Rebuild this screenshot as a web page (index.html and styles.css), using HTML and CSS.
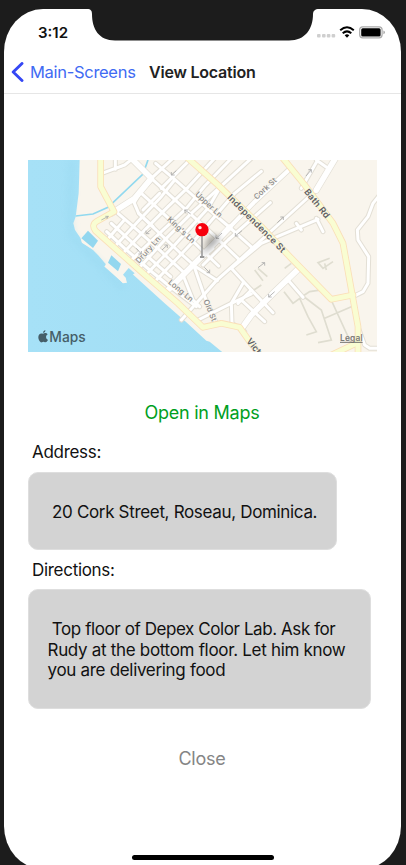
FILE: index.html
```
<!DOCTYPE html>
<html lang="en">
<head>
<meta charset="utf-8">
<title>View Location</title>
<link rel="stylesheet" href="styles.css">
</head>
<body>
<div class="device">
<div class="screen">
  <svg class="notch" width="232" height="32" viewBox="0 0 232 32"><path d="M0 0C4 0 5 2 5 5C5 20 12 31.500 28 31.500H202C218 31.500 226 20 226 5C226 2 228 0 232 0Z"/></svg>
  <header class="status">
    <span class="time">3:12</span>
    <svg class="indicators" width="70" height="16" viewBox="0 0 70 16">
      <g fill="#cfcfcf"><rect x="1" y="9" width="3.600" height="3.600" rx="1"/><rect x="6" y="9" width="3.600" height="3.600" rx="1"/><rect x="10.800" y="9" width="3.600" height="3.600" rx="1"/><rect x="15.600" y="9" width="3.600" height="3.600" rx="1"/></g>
      <g fill="none" stroke="#000" stroke-width="2"><path d="M24.200 5.200Q31 -0.600 37.800 5.200"/><path d="M26.700 8.200Q31 4.500 35.300 8.200"/></g>
      <path d="M28.700 10.300Q31 8.400 33.300 10.300L31 12.700Z"/>
      <rect x="43.700" y="1.800" width="22.400" height="11" rx="3" fill="#fff" stroke="#aaa" stroke-width="1.200"/>
      <rect x="45.200" y="3.200" width="19.400" height="8.200" rx="1.500"/>
      <path d="M67.400 5.500Q69 6 69 7.300T67.400 9.200Z" fill="#aaa"/>
    </svg>
  </header>
  <nav class="nav">
    <svg class="chevron" width="13" height="20" viewBox="0 0 13 20"><path d="M11 1.500L2.200 10L11 18.500"/></svg>
    <span class="back">Main-Screens</span>
    <h1 class="title">View Location</h1>
  </nav>
  <main class="content">
    <svg class="map" width="349" height="192" viewBox="0 0 1047 576">
      <defs>
        <filter id="soft" x="-20%" y="-20%" width="140%" height="140%"><feGaussianBlur stdDeviation="9"/></filter>
        <linearGradient id="sea" x1="0" x2="1" y1="0" y2="0"><stop offset="0" stop-color="#a6e1f7"/><stop offset="1" stop-color="#a2def4"/></linearGradient>
        <g id="lanes">
          <path d="M383 10L440 58L530 138L600 198L672 262"/>
          <path d="M305 -6L370 55L480 155L560 228L637 302"/>
          <path d="M337 97L400 155L470 220L522 270L572 318"/>
          <path d="M317 125L332 160L400 225L460 282L500 318L568 362"/>
          <path d="M270 160L330 212L400 275L465 335"/>
          <path d="M250 190L310 245L380 308L428 350"/>
          <path d="M236 215L290 265L365 330L420 375L505 440"/>
          <path d="M242 234L287 182"/>
          <path d="M262 258L332 182L400 110L440 60"/>
          <path d="M288 277L355 205L420 140L480 82L560 -5"/>
          <path d="M312 298L400 215L475 145L530 78L610 -5"/>
          <path d="M335 322L415 235L490 160L545 110L670 -5"/>
          <path d="M358 340L440 255L540 145L575 85"/>
          <path d="M380 365L460 282L500 240L620 100L700 34"/>
          <path d="M370 55L435 -5M400 85L490 -5"/>
          <path d="M228 38L290 15L315 -5M262 28V-5"/>
          <path d="M320 125L337 97L370 60"/>
          <path d="M375 200L332 160M345 150L395 100"/>
          <path d="M525 315L600 240L727 128"/>
          <path d="M480 330L555 265"/>
          <path d="M460 480L565 362L640 295L700 240L865 90"/>
          <path d="M610 325L700 250L870 178M865 175L885 215M805 190L820 210"/>
          <path d="M610 325L670 390L735 458M645 370L610 430L612 490L650 515"/>
          <path d="M465 345L495 420L515 440M498 318L530 410L565 490"/>
          <path d="M510 480L610 430L670 402"/>
          <path d="M640 420L710 485M670 390L630 430M780 360L825 412"/>
          <path d="M820 85L872 -5M865 0L900 25"/>
          <path d="M1055 105L1035 130L1020 170L988 210L990 240L1022 290L1020 370L1005 395L975 410"/>
          <path d="M990 500L1010 555L1025 565H1055"/>
        </g>
        <g id="streets">
          <path d="M250 160L320 115L370 55L310 -5"/>
          <path d="M415 395L520 290L605 202"/>
          <path d="M645 500L670 465L740 395L810 328"/>
          <path d="M865 90L925 -10"/>
        </g>
        <path id="cork" d="M605 202L680 125L780 32"/>
        <g id="avenues">
          <path d="M218 -5V80L258 155L205 185Q190 195 202 212L340 335L450 430L525 502L580 490L635 502L665 545L700 590"/>
          <path d="M480 -5L570 75L700 200L790 295L910 418L975 405"/>
          <path d="M765 -5L830 75L915 190L945 250L972 400L990 500V590"/>
          <path d="M900 590L985 550"/>
        </g>
      </defs>
      <rect width="1047" height="576" fill="#f9f5ed"/>
      <path d="M0 0H155L152 100L143 170L136 190L141 210L158 235L162 248L195 270L210 285L240 320L290 365L300 330L410 430L475 487L535 542L545 545L585 578H0Z" fill="url(#sea)"/>
      <path d="M130 0L126 170L130 225L285 385" fill="none" stroke="#91d3ec" stroke-width="20" opacity=".25" filter="url(#soft)"/>
      <path d="M158 235L162 248L195 268L205 265L185 245L165 228Z" fill="#f9f5ed"/>
      <path d="M160 235L180 212L210 242L195 264Z" fill="#93d7ef"/>
      <path d="M232 316L245 288L302 328L292 350L297 368L285 370Z" fill="#f9f5ed"/>
      <path d="M240 308L250 286L279 312L270 334Z" fill="#93d7ef"/>
      <path d="M285 344L302 324L320 340L296 356Z" fill="#a2def4"/>
      <path d="M232 316L288 366" stroke="#f9f5ed" stroke-width="9"/>
      <path d="M143 168L195 162L240 142L345 42L360 0" fill="none" stroke="#91d9ef" stroke-width="5"/>
      <g fill="none" stroke="#dfddd0" stroke-width="5"><path d="M768 395L795 430L825 408L845 395L880 390L905 410L975 562M815 415L840 470L865 515L835 525M825 408L880 450L910 540L870 548M890 475L970 440M905 295L870 308L885 325L915 305M890 310L895 330M680 330L705 362M690 325L718 350M670 395L700 375M770 325L790 310"/></g>
      <g fill="none" stroke-linejoin="round" stroke-linecap="round">
        <use href="#lanes" stroke="#e3dfd5" stroke-width="15"/>
        <use href="#cork" stroke="#e3dfd5" stroke-width="17"/>
        <use href="#streets" stroke="#e3dfd5" stroke-width="21"/>
        <use href="#lanes" stroke="#fff" stroke-width="9"/>
        <use href="#cork" stroke="#fff" stroke-width="12"/>
        <use href="#streets" stroke="#fff" stroke-width="17"/>
        <use href="#avenues" stroke="#fbdfb8" stroke-width="20"/>
        <use href="#avenues" stroke="#f9fdd2" stroke-width="15"/>
      </g>
      <g fill="none" stroke="#aaa" stroke-width="2.500">
        <path d="M220 180L241 169M232 169L241 169L236 177"/>
        <path d="M430 45L445 32M430 36V45H440M488 162L470 150M472 160L470 150H480M370 208L354 221M354 212V221H364M402 270L418 255M409 255H418V264M545 338L529 322M545 329V338H536M564 235L582 219M564 226V235H573M622 228L642 212M622 219V228H631M690 323L710 308M701 308H710V317M748 188L766 171M757 171H766V180M722 411L740 395M722 402V411H731M834 48L850 29M841 29H850V38M325 265L340 282M331 282H340V273"/>
      </g>
      <g class="label">
        <text transform="translate(500 105) rotate(43)" textLength="101">Upper Ln</text>
        <text transform="translate(416 180) rotate(43)" textLength="104">King's Ln</text>
        <text transform="translate(333 311) rotate(-48)" textLength="98">Drury Ln</text>
        <text transform="translate(419 369) rotate(40)" textLength="90">Long Ln</text>
        <text transform="translate(526 422) rotate(68)" textLength="69">Old St</text>
        <text transform="translate(686 120) rotate(-43)" textLength="84">Cork St</text>
      </g>
      <g class="label major">
        <text transform="translate(596 114) rotate(45)" textLength="234">Independence St</text>
        <text transform="translate(827 96) rotate(51)" textLength="104">Bath Rd</text>
        <text transform="translate(654 544) rotate(51)">Vict</text>
      </g>
      <path d="M524 286L540 232L568 225L575 240Z" opacity=".35" filter="url(#soft)"/>
      <path d="M522 220V288" stroke="#888" stroke-width="4"/><path d="M516 291H529" stroke="#666" stroke-width="4"/>
      <circle cx="522" cy="209" r="20" fill="#f7000c"/><circle cx="516" cy="203" r="5" fill="#fff" opacity=".9"/>
      <g transform="translate(30 512)" fill="#455e68"><path d="M15 9C18 9 20 6 24 7Q27 8 29 11Q24 14 24 19Q24 25 30 28Q26 36 21 35Q16 32 12 35C6 37 1 27 1 20C1 11 7 6 15 9Z"/><path d="M15 7Q14 1 22 -2Q23 5 15 7Z"/></g>
      <text class="brand" x="64" y="546" textLength="109" lengthAdjust="spacingAndGlyphs">Maps</text>
      <text class="legal" x="936" y="543" textLength="68">Legal</text>
      <path d="M936 547H1004" stroke="#74736f" stroke-width="3"/>
    </svg>
    <button class="open">Open in Maps</button>
    <h2 class="heading">Address:</h2>
    <p class="card address">20 Cork Street, Roseau, Dominica.</p>
    <h2 class="heading">Directions:</h2>
    <p class="card directions"> Top floor of Depex Color Lab. Ask for
Rudy at the bottom floor. Let him know
you are delivering food</p>
    <button class="close">Close</button>
  </main>
  <div class="home"></div>
</div>
</div>
</body>
</html>
```
FILE: styles.css
```
* { box-sizing: border-box; }
body { margin: 0; background: #1c1c1c; font-family: Inter, "Liberation Sans", sans-serif; color: #111; }
.device { height: 865px; padding: 9px 5px 0 4px; overflow: hidden; }
.screen { position: relative; height: 860px; background: #fff; border-radius: 39px / 43px; }
.notch { position: absolute; left: 83px; top: 0; fill: #1c1c1c; }
.status { height: 42px; display: flex; justify-content: space-between; align-items: flex-start; padding: 16px 15px 0 34px; }
.time { margin-top: -1px; font-size: 15px; font-weight: 600; line-height: 17px; letter-spacing: 0; }
.indicators { display: block; }
.nav { height: 43px; display: flex; align-items: center; padding-left: 7px; border-bottom: 1px solid #e6e6e6; }
.chevron { fill: none; stroke: #3547f5; stroke-width: 2.9; stroke-linecap: round; stroke-linejoin: round; }
.back { margin-left: 6px; width: 119px; font-size: 16.5px; letter-spacing: -0.3px; color: #3f6bf3; white-space: nowrap; }
.title { margin: 0; font-size: 16px; font-weight: 600; letter-spacing: -0.22px; color: #222; }
.content { padding: 66px 24px 0; display: flex; flex-direction: column; align-items: flex-start; }
.map { display: block; }
button { align-self: center; border: 0; padding: 0; background: none; font-family: inherit; font-size: 18px; line-height: 24px; }
.open { margin-top: 49px; margin-right: 1px; color: #00a01e; letter-spacing: -0.25px; }
.heading { margin: 16px 0 0 4px; font-size: 17px; font-weight: 400; line-height: 22px; letter-spacing: -0.3px; }
.card { margin: 9px 0 0; border: 1px solid #dedede; border-radius: 10px; background: #d3d3d3; font-size: 17px; line-height: 20.7px; letter-spacing: -0.33px; white-space: pre; }
.address { width: 309px; height: 78px; padding: 29px 0 0 23px; }
.address + .heading { margin-top: 9px; }
.directions { width: 343px; height: 120px; margin-top: 8px; padding: 29px 0 0 18.5px; letter-spacing: -0.31px; }
.directions::first-line { letter-spacing: -0.42px; }
.close { margin-top: 38px; margin-right: 1px; color: #858585; letter-spacing: -0.25px; }
.home { position: absolute; left: 128px; top: 846px; width: 142px; height: 5px; border-radius: 3px; background: #000; }
.label { font-size: 23px; font-weight: 500; fill: #888; stroke: #f9f5ed; stroke-width: 3px; paint-order: stroke; }
.major { font-size: 27px; font-weight: 600; fill: #606060; }
.brand { font-size: 42px; font-weight: 500; fill: #455e68; }
.legal { font-size: 25px; font-weight: 600; fill: #7b7a77; }
```
